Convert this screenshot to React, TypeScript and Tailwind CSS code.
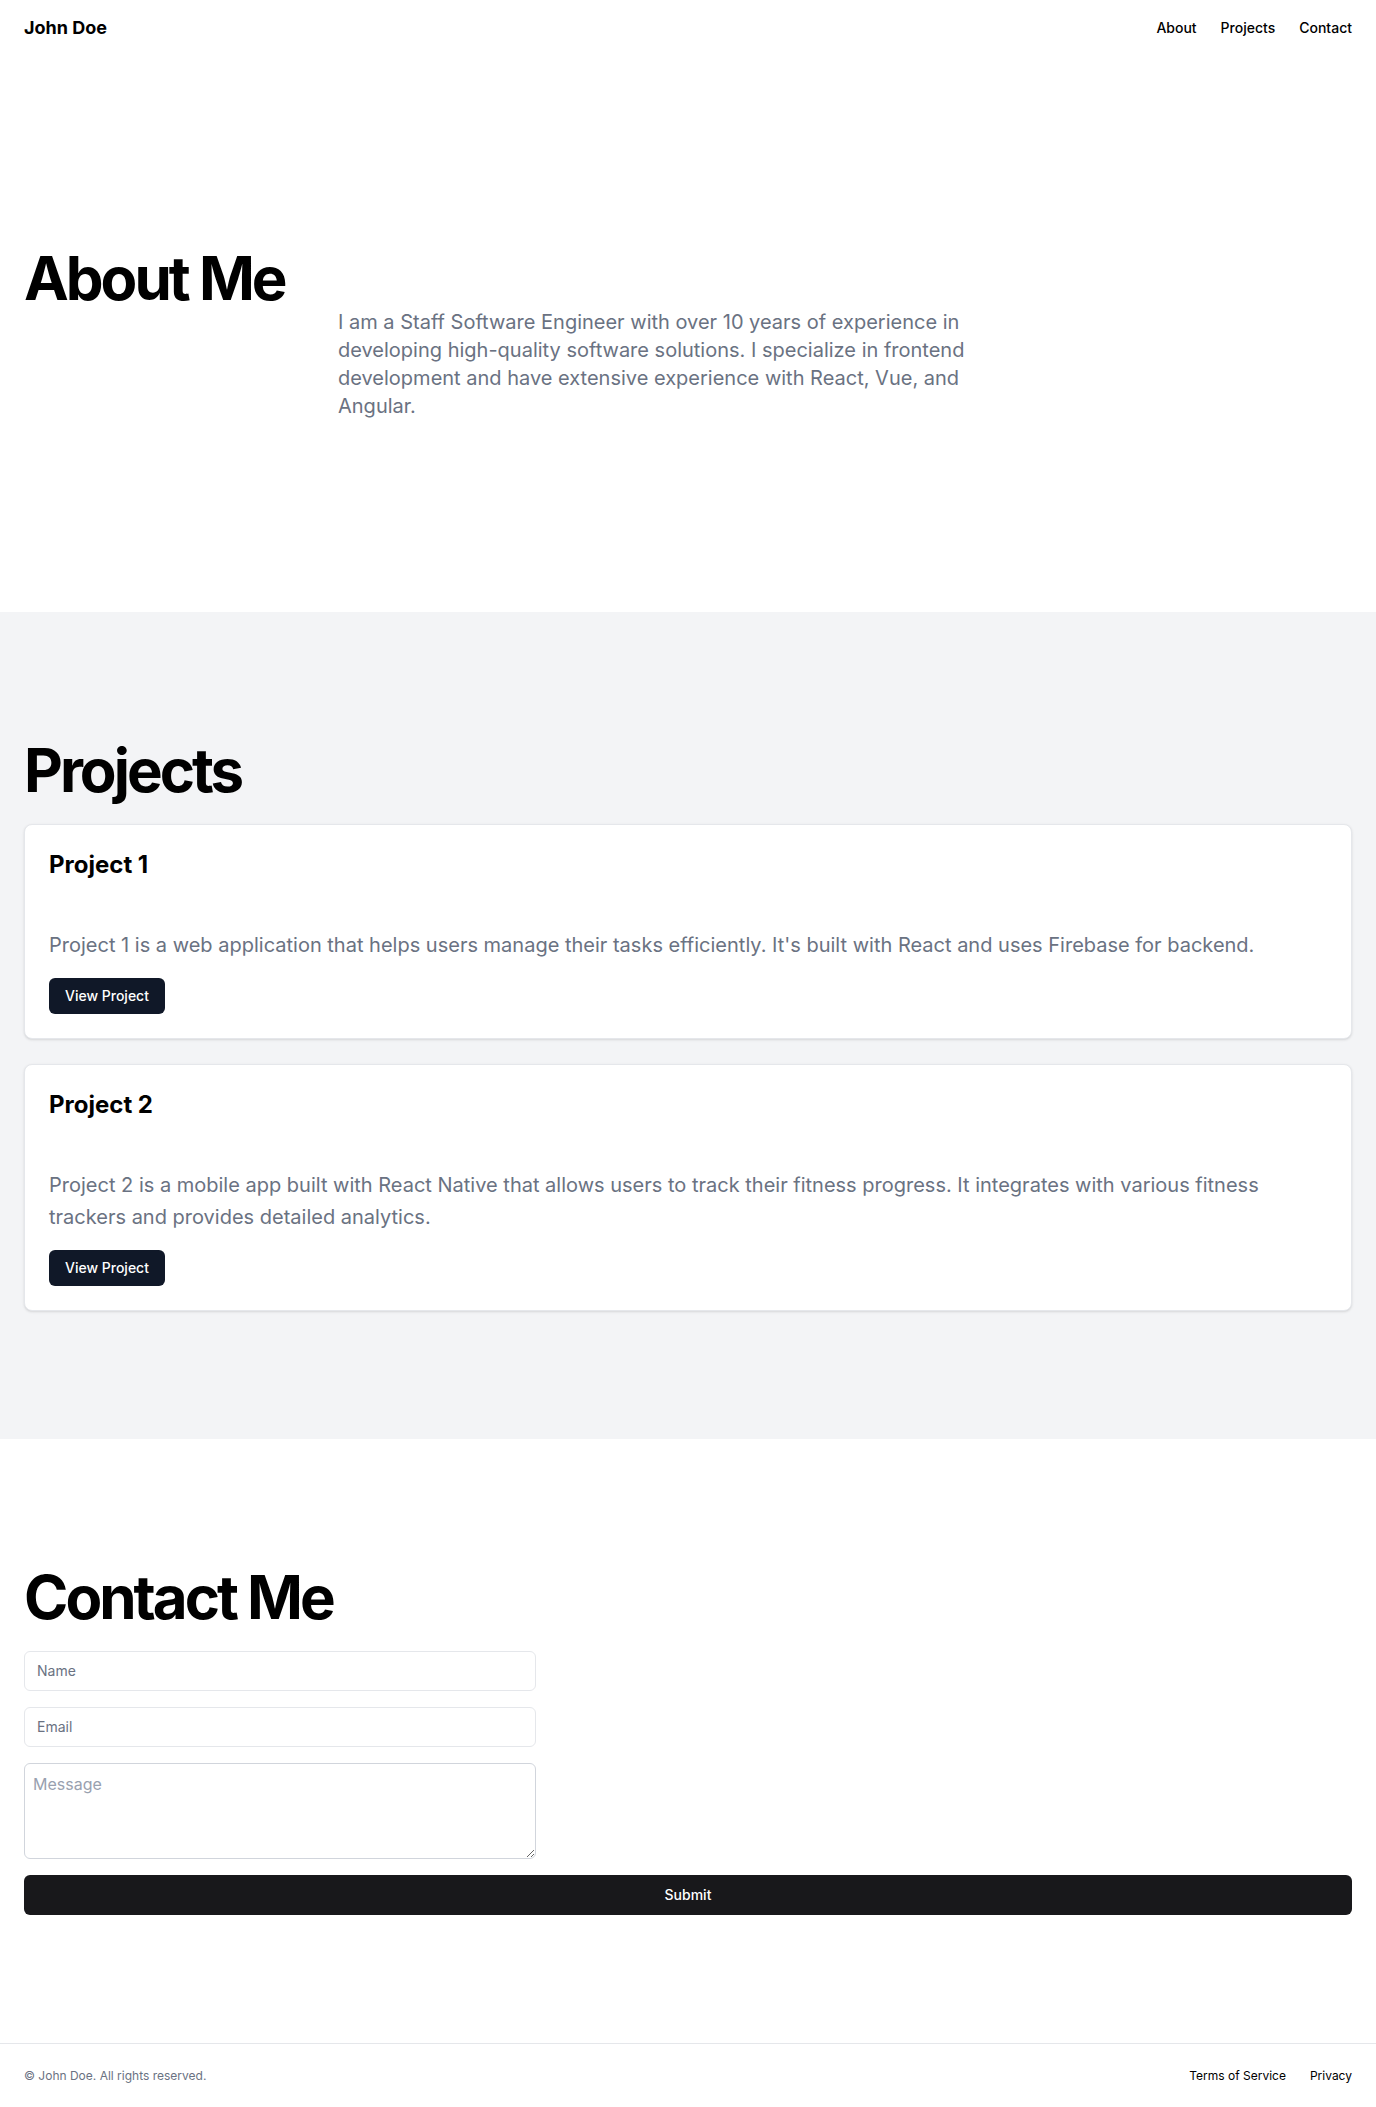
import React from "react";

const navLinks = ["About", "Projects", "Contact"];

const projects = [
  {
    title: "Project 1",
    description:
      "Project 1 is a web application that helps users manage their tasks efficiently. It's built with React and uses Firebase for backend.",
  },
  {
    title: "Project 2",
    description:
      "Project 2 is a mobile app built with React Native that allows users to track their fitness progress. It integrates with various fitness trackers and provides detailed analytics.",
  },
];

export default function App() {
  return (
    <div className="flex min-h-screen flex-col bg-white font-['Inter',sans-serif] text-black">
      <header className="flex h-14 items-center px-6">
        <a href="#" className="text-lg font-bold">
          John Doe
        </a>
        <nav className="ml-auto flex gap-6">
          {navLinks.map((link) => (
            <a key={link} href={"#" + link.toLowerCase()} className="text-sm font-medium">
              {link}
            </a>
          ))}
        </nav>
      </header>

      <main className="flex-1">
        <section id="about" className="w-full py-48">
          <div className="px-6">
            <h2 className="text-6xl font-bold leading-none tracking-tighter">About Me</h2>
            <p className="mx-auto max-w-[700px] text-xl text-gray-500">
              I am a Staff Software Engineer with over 10 years of experience in developing
              high-quality software solutions. I specialize in frontend development and have
              extensive experience with React, Vue, and Angular.
            </p>
          </div>
        </section>

        <section id="projects" className="w-full bg-gray-100 py-32">
          <div className="px-6">
            <h2 className="text-6xl font-bold leading-none tracking-tighter">Projects</h2>
            <div className="mt-6 flex flex-col gap-[25px]">
              {projects.map((project) => (
                <div
                  key={project.title}
                  className="rounded-lg border border-gray-200 bg-white p-6 shadow-sm"
                >
                  <h3 className="text-2xl font-bold">{project.title}</h3>
                  <p className="mt-12 text-xl leading-relaxed text-gray-500">
                    {project.description}
                  </p>
                  <button className="mt-4 h-9 rounded-md bg-gray-900 px-4 text-sm font-medium text-white">
                    View Project
                  </button>
                </div>
              ))}
            </div>
          </div>
        </section>

        <section id="contact" className="w-full py-32">
          <div className="px-6">
            <h2 className="text-6xl font-bold leading-none tracking-tighter">Contact Me</h2>
            <form className="mt-6 flex flex-col gap-4">
              <input
                type="text"
                placeholder="Name"
                className="h-10 w-full max-w-lg rounded-md border border-gray-200 bg-white px-3 text-sm placeholder:text-gray-500"
              />
              <input
                type="email"
                placeholder="Email"
                className="h-10 w-full max-w-lg rounded-md border border-gray-200 bg-white px-3 text-sm placeholder:text-gray-500"
              />
              <textarea
                placeholder="Message"
                className="h-24 w-full max-w-lg rounded-md border border-gray-300 p-2 text-base placeholder:text-gray-400"
              />
              <button
                type="button"
                className="h-10 w-full rounded-md bg-[#18181b] text-sm font-medium text-white"
              >
                Submit
              </button>
            </form>
          </div>
        </section>
      </main>

      <footer className="flex w-full items-center border-t border-gray-200 px-6 py-6">
        <p className="text-xs text-gray-500">© John Doe. All rights reserved.</p>
        <nav className="ml-auto flex gap-6">
          <a href="#" className="text-xs">
            Terms of Service
          </a>
          <a href="#" className="text-xs">
            Privacy
          </a>
        </nav>
      </footer>
    </div>
  );
}
